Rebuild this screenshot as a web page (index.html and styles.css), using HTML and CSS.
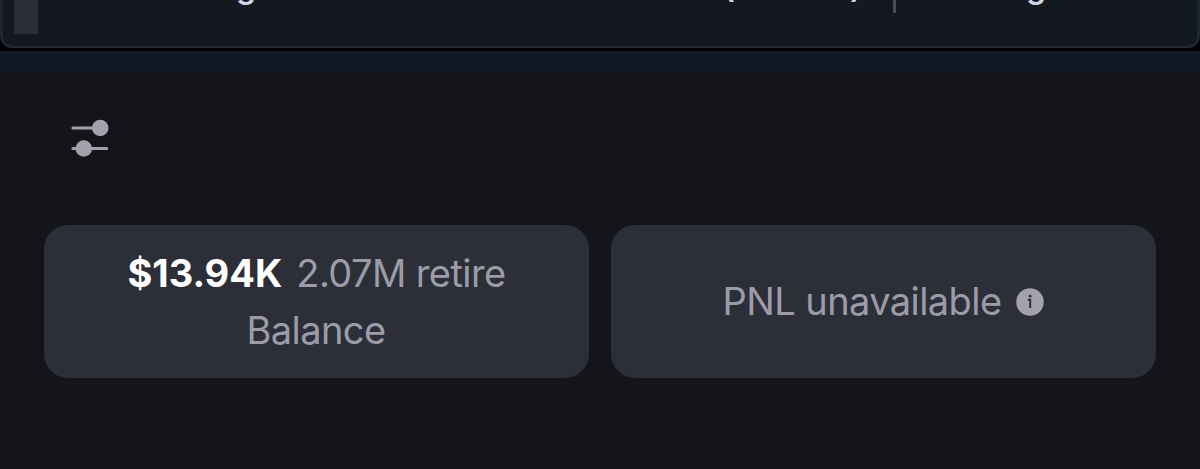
FILE: index.html
```html
<!DOCTYPE html>
<html lang="en">

<head>
    <meta charset="utf-8">
    <title>Balance</title>
    <link rel="stylesheet" href="styles.css">
</head>

<body>
    <div class="top">
        <div class="panel">
            <div class="thumb"></div>
            <div class="ticker">
                <span class="first">g</span>
                <span class="open">(</span>
                <span class="close">)</span>
                <span class="divider"></span>
                <span class="last">g</span>
            </div>
        </div>
    </div>
    <div class="band"></div>

    <main class="wallet">
        <svg class="filter-icon" width="40" height="40" viewBox="0 0 40 40">
            <path d="M3 10H30M3 30.5H36.7" stroke="#a2a1ac" stroke-width="3.2" stroke-linecap="round" />
            <circle cx="30.2" cy="10" r="8.3" fill="#a2a1ac" />
            <circle cx="13.8" cy="30.5" r="8.3" fill="#a2a1ac" />
        </svg>

        <div class="cards">
            <div class="card">
                <p><strong>$13.94K</strong><span class="amount">2.07M retire</span></p>
                <p class="label">Balance</p>
            </div>
            <div class="card">
                <p class="pnl">
                    <span>PNL unavailable</span>
                    <svg class="info-icon" width="28" height="28" viewBox="0 0 28 28">
                        <circle cx="14" cy="14" r="13.8" fill="#a2a1ac" />
                        <circle cx="14.2" cy="8.2" r="1.4" fill="#2d2f38" />
                        <path d="M11.8 11.8H14.2V20" fill="none" stroke="#2d2f38" stroke-width="2" />
                    </svg>
                </p>
            </div>
        </div>
    </main>
</body>

</html>
```
FILE: styles.css
```css
body {
    font-family: Inter, sans-serif;
    background-color: #14151a;
    color: #9c9ca9;
    margin: 0;
    height: 469px;
    overflow: hidden;
}

p {
    margin: 0;
}

.top {
    height: 51px;
    background-color: #000;
}

.panel {
    display: flex;
    height: 48px;
    box-sizing: border-box;
    padding-left: 11px;
    background-color: #141821;
    border: 3px solid #1b2937;
    border-top: none;
    border-bottom: 2px solid #242c35;
    border-radius: 0 0 12px 12px;
}

.thumb {
    width: 24px;
    height: 34px;
    background-color: #2b2d36;
}

.ticker {
    display: flex;
    height: 13px;
    overflow: hidden;
    color: #d3d6e0;
    font-size: 32px;
    font-weight: 600;
    line-height: 32px;
}

.ticker span {
    flex: none;
    margin-top: -29px;
}

.ticker .first {
    width: 487px;
    padding-left: 198px;
}

.ticker .open {
    width: 127px;
}

.ticker .close {
    width: 43px;
}

.ticker .divider {
    width: 3px;
    height: 13px;
    margin-top: 0;
    background-color: #4a4d57;
}

.ticker .last {
    padding-left: 130px;
}

.band {
    height: 21px;
    background-color: #101827;
}

.wallet {
    padding: 46px 44px 0;
}

.filter-icon {
    display: block;
    margin-left: 26px;
}

.cards {
    display: grid;
    grid-template-columns: 1fr 1fr;
    gap: 22px;
    margin-top: 67px;
}

.card {
    display: flex;
    flex-direction: column;
    align-items: center;
    justify-content: center;
    height: 153px;
    background-color: #2d2f38;
    border-radius: 24px;
    font-size: 38px;
    letter-spacing: -0.58px;
    line-height: 57px;
}

.card strong {
    color: #fff;
    font-weight: 700;
    letter-spacing: 0;
}

.amount {
    margin-left: 14px;
}

.label {
    padding-right: 1px;
}

.pnl {
    display: flex;
    align-items: center;
    gap: 15px;
}
```
